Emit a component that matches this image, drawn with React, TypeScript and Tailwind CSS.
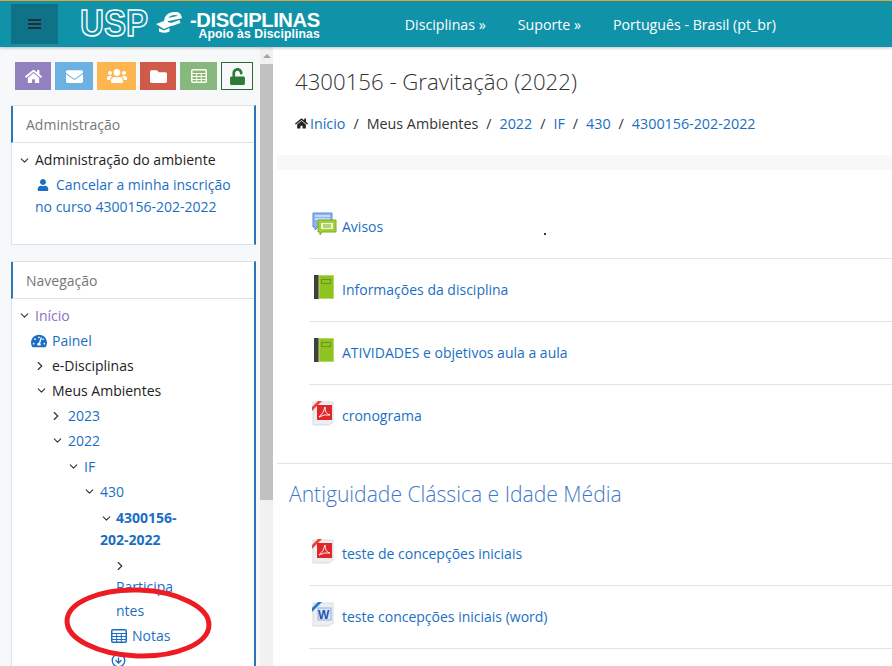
import React from 'react';
import { ChevronDown, ChevronRight, CircleArrowDown } from 'lucide-react';
import { FaHome, FaEnvelope, FaUsers, FaFolder, FaUnlock, FaUser, FaTachometerAlt } from 'react-icons/fa';

const link = 'text-[#1b6fc2]';

const ToolButton: React.FC<{ className: string; children: React.ReactNode }> = ({ className, children }) => (
  <div className={`h-7 flex items-center justify-center text-[17px] ${className}`}>{children}</div>
);

const Down = () => <ChevronDown size={13} strokeWidth={2} className="text-[#333] shrink-0" />;
const Right = () => <ChevronRight size={14} strokeWidth={2} className="text-[#333] shrink-0 -ml-[2px]" />;

const GridIcon: React.FC<{ className: string; fill: string }> = ({ className, fill }) => (
  <svg width="16" height="14" viewBox="0 0 16 14" className={className}>
    <rect x="0.75" y="0.75" width="14.5" height="12.5" rx="1" fill={fill} stroke="currentColor" strokeWidth="1.5" />
    <path d="M1 4.5h14M1 7.5h14M1 10.5h14M5.7 4v9M10.3 4v9" stroke="currentColor" strokeWidth="1" />
  </svg>
);

const Logo = () => (
  <div className="flex items-center text-white h-full ml-[22px]">
    <svg width="68" height="30" viewBox="0 0 68 30" className="shrink-0 overflow-visible">
      <text x="0" y="27" fontFamily="Liberation Sans" fontWeight="700" fontSize="37" textLength="68" lengthAdjust="spacingAndGlyphs" fill="none" stroke="#fff" strokeWidth="1.5">USP</text>
    </svg>
    <svg width="27" height="22" viewBox="0 0 27 22" className="ml-[8px] -mt-[3px] shrink-0">
      <path d="M10 8 L24 5 Q23 1 18 1.5 Q10 2.5 9.5 9 Q11 13.5 17 12 L24 9.5" fill="none" stroke="#fff" strokeWidth="3.2" />
      <path d="M0 12 L8 9 L17 13 L8 17 Z" fill="#fff" />
      <path d="M3 16 L3 19.5 Q8 22 13.5 19.5 L13.5 16 L8 18.5 Z" fill="#fff" />
    </svg>
    <div className="ml-[7px] font-['Liberation_Sans',sans-serif] font-bold relative top-[1px]">
      <div className="text-[20.2px] leading-[18px] tracking-[-0.4px]">-DISCIPLINAS</div>
      <div className="text-[12.2px] leading-[11px] text-right tracking-[0.1px]">Apoio às Disciplinas</div>
    </div>
  </div>
);

const Header = () => (
  <header className="h-[47px] shrink-0 bg-[#1092a9] border-t-[1px] border-[#f0a030] flex items-center shadow-[0_1px_3px_rgba(0,0,0,0.25)] relative z-10">
    <div className="ml-[11px] w-[47px] h-10 bg-[#0e7386] flex items-center justify-center">
      <div className="w-[13px] flex flex-col gap-[2px]">
        <span className="h-[2px] bg-[#1f2d3d]" />
        <span className="h-[2px] bg-[#1f2d3d]" />
        <span className="h-[2px] bg-[#1f2d3d]" />
      </div>
    </div>
    <Logo />
    <nav className="flex items-center gap-8 ml-[85px] pt-[2px] text-white text-[14.2px]">
      <span>Disciplinas »</span>
      <span>Suporte »</span>
      <span>Português - Brasil ‎(pt_br)‎</span>
    </nav>
  </header>
);

const Block: React.FC<{ title: string; className?: string; children: React.ReactNode }> = ({ title, className, children }) => (
  <section className={`ml-[11px] w-[245px] bg-white border border-[#dfe1e4] border-r-[2px] border-r-[#2a76b8] ${className ?? ''}`}>
    <h2 className="h-[37px] -ml-px pl-[13px] flex items-center text-[14px] text-[#777] font-normal border-l-[2px] border-l-[#2a76b8] border-b border-b-[#dfe1e4]">{title}</h2>
    {children}
  </section>
);

const Row: React.FC<{ indent: string; children: React.ReactNode }> = ({ indent, children }) => (
  <div className={`flex items-center h-[25px] ${indent}`}>{children}</div>
);

const Sidebar = () => (
  <aside className="w-[260px] shrink-0 bg-[#f7f8fa] overflow-hidden">
    <div className="flex mt-[15px] ml-[15px] gap-[4px] items-center">
      <ToolButton className="w-9 bg-[#9281bd] text-white"><FaHome /></ToolButton>
      <ToolButton className="w-[38px] bg-[#6db1e2] text-white"><FaEnvelope /></ToolButton>
      <ToolButton className="w-[39px] bg-[#fdb64f] text-white"><FaUsers size={20} /></ToolButton>
      <ToolButton className="w-9 bg-[#d05a49] text-white"><FaFolder /></ToolButton>
      <ToolButton className="w-[37px] bg-[#86b87f] text-white"><GridIcon className="text-[#fdfde8]" fill="#86b87f" /></ToolButton>
      <ToolButton className="w-8 bg-[#f7f8fa] border border-[#2f6b2f] text-[#2f7a35] text-[13px]"><FaUnlock /></ToolButton>
    </div>

    <Block title="Administração" className="mt-[15px] h-[140px]">
      <div className="pt-[6px] pl-[6px] text-[14px] leading-[22px]">
        <div className="flex items-center gap-[4px] text-[#222]"><Down /><span>Administração do ambiente</span></div>
        <div className={`${link} ml-[17px] mt-[3px]`}>
          <div className="pl-[2px] flex items-center gap-[7px]"><FaUser size={12} /><span>Cancelar a minha inscrição</span></div>
          <div>no curso 4300156-202-2022</div>
        </div>
      </div>
    </Block>

    <Block title="Navegação" className="mt-[16px] h-[420px]">
      <div className="pt-[4px] pl-[6px] text-[14px]">
        <Row indent=""><span className="w-[17px] shrink-0"><Down /></span><span className="text-[#8a6fc0]">Início</span></Row>
        <Row indent="pl-[13px]"><FaTachometerAlt size={16} className="text-[#1b6fc2] shrink-0" /><span className={`${link} ml-[5px]`}>Painel</span></Row>
        <Row indent="pl-[17px]"><span className="w-[17px] shrink-0"><Right /></span><span className="text-[#222]">e-Disciplinas</span></Row>
        <Row indent="pl-[17px]"><span className="w-[17px] shrink-0"><Down /></span><span className="text-[#222]">Meus Ambientes</span></Row>
        <Row indent="pl-[33px]"><span className="w-[17px] shrink-0"><Right /></span><span className={link}>2023</span></Row>
        <Row indent="pl-[33px]"><span className="w-[17px] shrink-0"><Down /></span><span className={link}>2022</span></Row>
        <Row indent="pl-[49px] mt-[1px]"><span className="w-[17px] shrink-0"><Down /></span><span className={link}>IF</span></Row>
        <Row indent="pl-[65px]"><span className="w-[17px] shrink-0"><Down /></span><span className={link}>430</span></Row>
        <div className="pl-[82px] font-bold text-[#1b6fc2] leading-[22px] w-[171px] mt-[3px]">
          <div className="flex items-center"><span className="w-[16px] shrink-0"><Down /></span><span>4300156-</span></div>
          <div>202-2022</div>
        </div>
        <div className="pl-[97px] mt-[8px] h-[16px]"><Right /></div>
        <div className={`pl-[98px] ${link} leading-[24px]`}>
          <div>Participa</div>
          <div>ntes</div>
        </div>
        <Row indent="pl-[93px]">
          <GridIcon className="text-[#1b6fc2] shrink-0" fill="none" /><span className={`${link} ml-[5px]`}>Notas</span>
        </Row>
        <div className="pl-[93px] pt-[5px]"><CircleArrowDown size={15} strokeWidth={2.2} className="text-[#1b6fc2]" /></div>
      </div>
    </Block>
  </aside>
);

const Scrollbar = () => (
  <div className="w-[13px] shrink-0 bg-[#f1f1f1] flex flex-col items-center">
    <div className="h-[17px] flex items-center"><span className="w-0 h-0 border-x-[4px] border-x-transparent border-b-[4px] border-b-[#a3a3a3]" /></div>
    <div className="w-full h-[436px] bg-[#c1c1c1]" />
  </div>
);

const ForumIcon = () => (
  <svg width="25" height="25" viewBox="0 0 25 25">
    <path d="M1 1h19v14H6l-3 3v-3H1z" fill="#8db4ef" stroke="#5b8ddb" />
    <path d="M3 4h15M3 7h15" stroke="#fff" />
    <path d="M6 8h18v12H10l-2 3v-3H6z" fill="#a3cf3f" stroke="#7cac22" />
    <path d="M9 11h12v6H9z" fill="#eef6d2" />
    <path d="M11 13h8M11 15h8" stroke="#7cac22" />
  </svg>
);

const BookIcon = () => (
  <svg width="20" height="25" viewBox="0 0 20 25">
    <rect x="0" y="0" width="5" height="24" fill="#3f3f3f" />
    <rect x="5" y="0.5" width="14.5" height="23" fill="#8fc31f" stroke="#b5d968" />
    <rect x="7.5" y="4.5" width="9" height="4" fill="none" stroke="#6f961a" />
  </svg>
);

const FileIcon: React.FC<{ corner: string; kind: 'pdf' | 'word' }> = ({ corner, kind }) => (
  <svg width="22" height="25" viewBox="0 0 22 25">
    <path d="M1 1h20v20l-4 3H1z" fill="#eceef2" stroke="#d9dbe0" />
    <path d="M0 6 L6 0 H10 L0 10 Z" fill={corner} />
    {kind === 'pdf' ? (
      <>
        <rect x="5" y="4" width="15" height="15" fill="#e1262a" />
        <path d="M7 16 Q12 12 13 6 Q13 13 18 14 Q12 13 7 16 Z" fill="none" stroke="#fff" strokeWidth="0.9" />
      </>
    ) : (
      <>
        <rect x="6" y="6" width="13" height="12" fill="#dfe8f7" stroke="#8fb0e0" />
        <text x="6" y="17" fontFamily="Liberation Sans" fontWeight="700" fontSize="12" fill="#1d57ad">W</text>
      </>
    )}
  </svg>
);

const Activity: React.FC<{ icon: React.ReactNode; label: string; last?: boolean; book?: boolean }> = ({ icon, label, last, book }) => (
  <div className={`h-[63px] ml-[32px] flex items-center ${last ? '' : 'border-b border-[#e3e4e6]'}`}>
    <div className={`w-[33px] flex items-center shrink-0 relative -top-[3px] ${book ? 'pl-[5px]' : 'pl-[3px]'}`}>{icon}</div>
    <span className={`${link} text-[14px] relative -top-px`}>{label}</span>
  </div>
);

const Main = () => (
  <main className="flex-1 min-w-0 bg-white ml-[4px] overflow-hidden">
    <div className="h-[108px] pl-[18px] pt-[19px]">
      <h1 className="text-[22.2px] leading-[32px] text-[#333] font-light">4300156 - Gravitação (2022)</h1>
      <div className="flex items-center mt-[15px] text-[14.3px] text-[#333] gap-[8px]">
        <span className={`flex items-center gap-[2px] ${link}`}><FaHome size={13} className="text-[#222]" />Início</span>
        <span>/</span><span>Meus Ambientes</span>
        <span>/</span><span className={link}>2022</span>
        <span>/</span><span className={link}>IF</span>
        <span>/</span><span className={link}>430</span>
        <span>/</span><span className={link}>4300156-202-2022</span>
      </div>
    </div>
    <div className="h-[15px] bg-[#f7f8fa]" />
    <div className="pt-[26px] border-b border-[#e3e4e6] pb-[15px] relative">
      <Activity icon={<ForumIcon />} label="Avisos" />
      <Activity book icon={<BookIcon />} label="Informações da disciplina" />
      <Activity book icon={<BookIcon />} label="ATIVIDADES e objetivos aula a aula" />
      <Activity icon={<FileIcon corner="#e8453c" kind="pdf" />} label="cronograma" last />
      <span className="absolute left-[267px] top-[63px] w-[2px] h-[2px] bg-[#333]" />
    </div>
    <h3 className="pl-[12px] pt-[14px] text-[21.1px] leading-[32px] text-[#3f78c9] font-light">Antiguidade Clássica e Idade Média</h3>
    <div className="pt-[13px]">
      <Activity icon={<FileIcon corner="#e8453c" kind="pdf" />} label="teste de concepções iniciais" />
      <Activity icon={<FileIcon corner="#1f78d1" kind="word" />} label="teste concepções iniciais (word)" />
    </div>
  </main>
);

export default function App() {
  return (
    <div className="relative h-[666px] w-[892px] overflow-hidden flex flex-col bg-white font-['Open_Sans',sans-serif]">
      <Header />
      <div className="flex flex-1 min-h-0">
        <Sidebar />
        <Scrollbar />
        <Main />
      </div>
      {/* red marker drawn on top of the screenshot */}
      <svg width="892" height="666" className="absolute inset-0 pointer-events-none">
        <ellipse cx="138" cy="623" rx="71" ry="33" fill="none" stroke="#ed1c24" strokeWidth="5" transform="rotate(2 138 623)" />
      </svg>
    </div>
  );
}
